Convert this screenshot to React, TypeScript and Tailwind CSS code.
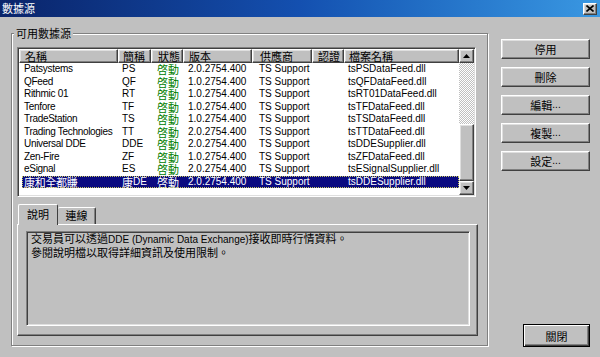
import React from "react";

const raised =
  "border border-t-white border-l-white border-r-[#404040] border-b-[#404040] shadow-[inset_-1px_-1px_0_#808080,inset_1px_1px_0_#dfdfdf] bg-[#c0c0c0]";

const cjk = "font-['Noto_Sans_CJK_TC','Liberation_Sans',sans-serif] text-[11px] leading-[12px]";
const latin = "font-['Liberation_Sans','Noto_Sans_CJK_TC',sans-serif] text-[10px] leading-[12px]";

type Row = {
  name: string;
  abbr: string;
  ver: string;
  file: string;
  selected?: boolean;
};

const rows: Row[] = [
  { name: "Patsystems", abbr: "PS", ver: "2.0.2754.400", file: "tsPSDataFeed.dll" },
  { name: "QFeed", abbr: "QF", ver: "1.0.2754.400", file: "tsQFDataFeed.dll" },
  { name: "Rithmic 01", abbr: "RT", ver: "1.0.2754.400", file: "tsRT01DataFeed.dll" },
  { name: "Tenfore", abbr: "TF", ver: "1.0.2754.400", file: "tsTFDataFeed.dll" },
  { name: "TradeStation", abbr: "TS", ver: "1.0.2754.400", file: "tsTSDataFeed.dll" },
  { name: "Trading Technologies", abbr: "TT", ver: "2.0.2754.400", file: "tsTTDataFeed.dll" },
  { name: "Universal DDE", abbr: "DDE", ver: "2.0.2754.400", file: "tsDDESupplier.dll" },
  { name: "Zen-Fire", abbr: "ZF", ver: "1.0.2754.400", file: "tsZFDataFeed.dll" },
  { name: "eSignal", abbr: "ES", ver: "2.0.2754.400", file: "tsESignalSupplier.dll" },
  { name: "康和全都賺", abbr: "康DE", ver: "2.0.2754.400", file: "tsDDESupplier.dll", selected: true },
];

// column widths, shared by header and rows
const cols = [
  { label: "名稱", w: "w-[99px]", pl: "pl-[5px]" },
  { label: "簡稱", w: "w-[33px]", pl: "pl-[4px]" },
  { label: "狀態", w: "w-[32px]", pl: "pl-[6px]" },
  { label: "版本", w: "w-[69px]", pl: "pl-[5px]" },
  { label: "供應商", w: "w-[60px]", pl: "pl-[7px]" },
  { label: "認證", w: "w-[32px]", pl: "pl-[5px]" },
  { label: "檔案名稱", w: "flex-1", pl: "pl-[4px]" },
];

function Txt({ s }: { s: string }) {
  // CJK runs a bit larger than latin, like the bitmap fonts in the shot
  const parts = s.split(/([\u3000-\u9fff\uff00-\uffef]+)/).filter(Boolean);
  return (
    <>
      {parts.map((p, i) =>
        /[\u3000-\u9fff\uff00-\uffef]/.test(p) ? (
          <span key={i} className={cjk}>
            {p}
          </span>
        ) : (
          <span key={i} className={latin}>
            {p}
          </span>
        ),
      )}
    </>
  );
}

function Arrow({ up }: { up?: boolean }) {
  return (
    <svg width="7" height="4" viewBox="0 0 7 4">
      {up ? <path d="M3.5 0L7 4H0z" fill="#000" /> : <path d="M0 0h7L3.5 4z" fill="#000" />}
    </svg>
  );
}

function Btn({ label }: { label: string }) {
  return (
    <button
      type="button"
      className={`${raised} flex h-[20px] w-[89px] items-center justify-center text-[10px] leading-[12px] text-black`}
    >
      <Txt s={label} />
    </button>
  );
}

function Cell({ w, children, className = "" }: { w: string; children?: React.ReactNode; className?: string }) {
  return (
    <div className={`${w} flex h-full items-center whitespace-nowrap text-[10px] leading-[12px] ${className}`}>
      {children}
    </div>
  );
}

function DataList() {
  return (
    <div className="flex h-[150px] w-[459px] border border-t-[#808080] border-l-[#808080] border-r-white border-b-white shadow-[inset_1px_1px_0_#404040,inset_-1px_-1px_0_#dfdfdf] p-[1px]">
      <div className="flex flex-1 flex-col overflow-hidden bg-white">
        <div className="flex h-[14px] shrink-0">
          {cols.map((c) => (
            <div
              key={c.label}
              className={`${c.w} ${c.pl} ${raised} flex items-center text-[10px] leading-[12px] text-black`}
            >
              <span className={cjk}>{c.label}</span>
            </div>
          ))}
        </div>
        {rows.map((r) => {
          const fg = r.selected ? "text-white" : "text-black";
          return (
            <div
              key={r.name}
              className={`ml-[3px] flex h-[12.5px] shrink-0 items-center ${fg} ${
                r.selected
                  ? "bg-[#0a0a80] outline-1 outline-dotted outline-[#c8c860] -outline-offset-1"
                  : ""
              }`}
            >
              <Cell w="w-[96px]" className="pl-[2px] tracking-[-0.3px]">
                <Txt s={r.name} />
              </Cell>
              <Cell w="w-[33px]" className="pl-[4px]">
                <Txt s={r.abbr} />
              </Cell>
              <Cell w="w-[32px]" className="pl-[6px]">
                <span className={`${cjk} ${r.selected ? "text-white" : "text-[#008000]"}`}>啓動</span>
              </Cell>
              <Cell w="w-[69px]" className="pl-[5px]">
                <span className={latin}>{r.ver}</span>
              </Cell>
              <Cell w="w-[60px]" className="pl-[7px]">
                <span className={latin}>TS Support</span>
              </Cell>
              <Cell w="w-[32px]" />
              <Cell w="flex-1" className="pl-[4px]">
                <span className={latin}>{r.file}</span>
              </Cell>
            </div>
          );
        })}
      </div>
      <div className="flex w-[15px] flex-col">
        <div className={`${raised} flex h-[14px] items-center justify-center`}>
          <Arrow up />
        </div>
        <div className="h-[61px] bg-[repeating-conic-gradient(#c0c0c0_0_25%,#ffffff_0_50%)] bg-[length:2px_2px]" />
        <div className={`${raised} flex-1`} />
        <div className={`${raised} flex h-[14px] items-center justify-center`}>
          <Arrow />
        </div>
      </div>
    </div>
  );
}

function TabPanel() {
  return (
    <div className="mt-[7px] flex flex-col">
      <div className="flex items-end pl-[1px]">
        <div className="relative z-10 -mb-[1px] flex h-[21px] w-[40px] items-start justify-center rounded-t-[2px] border border-b-0 border-t-white border-l-white border-r-[#404040] bg-[#c0c0c0] pt-[3px] text-[10px] leading-[12px] text-black">
          <span className={cjk}>說明</span>
        </div>
        <div className="flex h-[17px] w-[38px] items-start justify-center rounded-t-[2px] border border-b-0 border-t-white border-l-0 border-r-[#404040] bg-[#c0c0c0] pt-[1px] text-[10px] leading-[12px] text-black shadow-[inset_-1px_0_0_#808080]">
          <span className={cjk}>連線</span>
        </div>
      </div>
      <div className="h-[112px] w-[461px] border border-t-white border-l-white border-r-[#404040] border-b-[#404040] shadow-[inset_-1px_-1px_0_#808080] px-[8px] pt-[6px] pb-[9px]">
        <div className="h-full w-[444px] border border-t-[#808080] border-l-[#808080] border-r-white border-b-white shadow-[inset_1px_1px_0_#404040,inset_-1px_-1px_0_#dfdfdf] px-[4px] text-[10px] leading-[12px] text-black">
          <div>
            <Txt s="交易員可以透過DDE (Dynamic Data Exchange)接收即時行情資料。" />
          </div>
          <div>
            <Txt s="參閱說明檔以取得詳細資訊及使用限制。" />
          </div>
        </div>
      </div>
    </div>
  );
}

export default function App(): JSX.Element {
  return (
    <div className="h-[357px] w-[600px] overflow-hidden bg-[#c0c0c0] select-none">
      <div className="flex h-[17px] items-center justify-between bg-linear-to-r from-[#0a246a] via-[#1450b0] to-[#3a98e2]">
        <span className="pl-[2px] font-['Noto_Sans_CJK_TC',sans-serif] text-[11px] leading-none text-white">
          數據源
        </span>
        <div className={`${raised} mr-[3px] flex h-[12px] w-[14px] items-center justify-center`}>
          <svg width="8" height="7" viewBox="0 0 8 7">
            <path d="M0.5 0.5L7.5 6.5M7.5 0.5L0.5 6.5" stroke="#000" strokeWidth="1.6" />
          </svg>
        </div>
      </div>

      <div className="flex pl-[11px] pt-[10px]">
        <fieldset className="h-[319px] w-[477px] border border-[#808080] px-[5px] pb-[7px] shadow-[inset_1px_1px_0_#fff,1px_1px_0_#fff]">
          <legend className="-ml-[3px] bg-[#c0c0c0] px-[2px] text-[10px] leading-[12px] text-black">
            <span className={cjk}>可用數據源</span>
          </legend>
          <div className="mt-[7px]">
            <DataList />
          </div>
          <TabPanel />
        </fieldset>

        <div className="ml-[13px] flex h-[320px] flex-col pt-[12px]">
          <div className="flex flex-col gap-[8px]">
            <Btn label="停用" />
            <Btn label="刪除" />
            <Btn label="編輯..." />
            <Btn label="複製..." />
            <Btn label="設定..." />
          </div>
          <div className="mt-auto flex justify-end">
            <button
              type="button"
              className="flex h-[23px] w-[67px] items-center justify-center border border-black bg-[#c0c0c0] text-[10px] leading-[12px] text-black shadow-[inset_1px_1px_0_#fff,inset_-1px_-1px_0_#404040,inset_-2px_-2px_0_#808080]"
            >
              <Txt s="關閉" />
            </button>
          </div>
        </div>
      </div>
    </div>
  );
}
